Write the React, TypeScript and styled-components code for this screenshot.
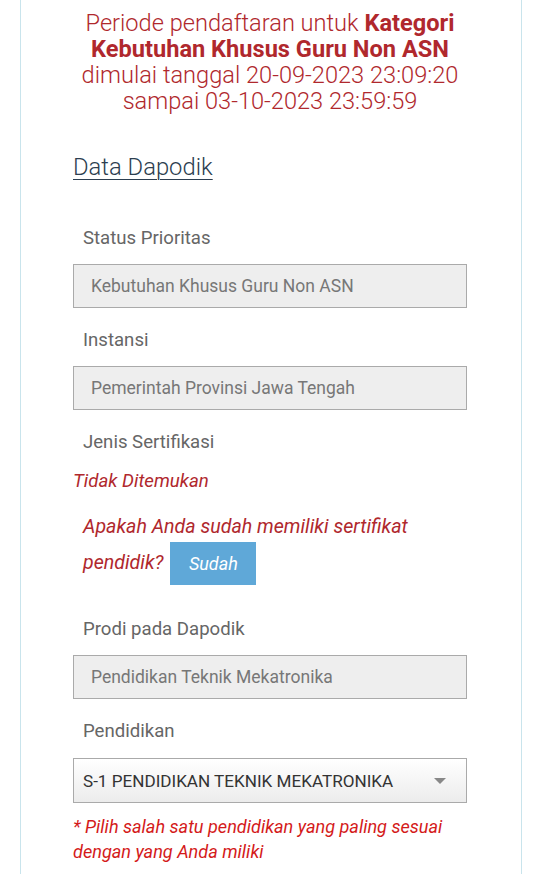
import React from "react";
import styled, { createGlobalStyle } from "styled-components";

const GlobalStyle = createGlobalStyle`
  body {
    margin: 0;
    background: #fff;
    font-family: Roboto, "Liberation Sans", sans-serif;
  }
`;

const Panel = styled.div`
  margin-left: 20px;
  width: 502px;
  min-height: 874px;
  box-sizing: border-box;
  border-left: 1px solid #c9e4ec;
  border-right: 1px solid #c9e4ec;
  padding: 10px 54px 20px 52px;
`;

const Notice = styled.div`
  text-align: center;
  color: #b0282d;
  font-size: 23.6px;
  font-weight: 300;
  line-height: 26px;
  margin: 0 -30px;

  b {
    font-weight: 700;
  }
`;

const SectionTitle = styled.h3`
  margin: 40px 0 0;
  font-size: 23.8px;
  font-weight: 300;
  line-height: 26px;
  color: #2c3e50;
  text-decoration: underline;
  text-underline-offset: 4px;
  text-decoration-thickness: 1px;
`;

const FieldLabel = styled.div<{ $top: number }>`
  margin-top: ${(p) => p.$top}px;
  padding-left: 10px;
  font-size: 18.6px;
  line-height: 22px;
  color: #666;
`;

const ReadonlyInput = styled.div`
  margin-top: 15px;
  height: 44px;
  box-sizing: border-box;
  border: 1px solid #aaa;
  background: #eee;
  padding: 0 17px;
  display: flex;
  align-items: center;
  font-size: 17.5px;
  color: #777;
`;

const NotFound = styled.div`
  margin-top: 17px;
  font-size: 18.7px;
  line-height: 22px;
  font-style: italic;
  color: #b0282d;
`;

const Question = styled.div`
  margin-top: 17px;
  padding-left: 10px;
  font-size: 19.6px;
  line-height: 36px;
  font-style: italic;
  color: #b0282d;
`;

const YesButton = styled.button`
  display: inline-flex;
  align-items: center;
  justify-content: center;
  vertical-align: middle;
  margin: -4px 0 -4px 2px;
  width: 86px;
  height: 43px;
  border: none;
  background: #5fa8d8;
  color: #fff;
  font-family: inherit;
  font-size: 18px;
  font-style: italic;
  padding: 0;
`;

const Select = styled.div`
  margin-top: 16px;
  height: 45px;
  box-sizing: border-box;
  border: 1px solid #aaa;
  background: linear-gradient(#fff, #ececec);
  padding: 0 20px 0 9px;
  display: flex;
  align-items: center;
  justify-content: space-between;
  font-size: 17.1px;
  color: #333;
`;

const Caret = styled.span`
  width: 0;
  height: 0;
  border-left: 6px solid transparent;
  border-right: 6px solid transparent;
  border-top: 6px solid #888;
`;

const Hint = styled.div`
  margin-top: 11px;
  font-size: 18.1px;
  line-height: 25px;
  font-style: italic;
  color: #d41a1a;
`;

export default function App() {
  return (
    <>
      <GlobalStyle />
      <Panel>
        <Notice>
          Periode pendaftaran untuk <b>Kategori</b>
          <br />
          <b>Kebutuhan Khusus Guru Non ASN</b>
          <br />
          dimulai tanggal 20-09-2023 23:09:20
          <br />
          sampai 03-10-2023 23:59:59
        </Notice>

        <SectionTitle>Data Dapodik</SectionTitle>

        <FieldLabel $top={47}>Status Prioritas</FieldLabel>
        <ReadonlyInput>Kebutuhan Khusus Guru Non ASN</ReadonlyInput>

        <FieldLabel $top={21}>Instansi</FieldLabel>
        <ReadonlyInput>Pemerintah Provinsi Jawa Tengah</ReadonlyInput>

        <FieldLabel $top={21}>Jenis Sertifikasi</FieldLabel>
        <NotFound>Tidak Ditemukan</NotFound>
        <Question>
          Apakah Anda sudah memiliki sertifikat
          <br />
          pendidik? <YesButton>Sudah</YesButton>
        </Question>

        <FieldLabel $top={37}>Prodi pada Dapodik</FieldLabel>
        <ReadonlyInput>Pendidikan Teknik Mekatronika</ReadonlyInput>

        <FieldLabel $top={21}>Pendidikan</FieldLabel>
        <Select>
          <span>S-1 PENDIDIKAN TEKNIK MEKATRONIKA</span>
          <Caret />
        </Select>
        <Hint>
          * Pilih salah satu pendidikan yang paling sesuai dengan yang Anda miliki
        </Hint>
      </Panel>
    </>
  );
}
